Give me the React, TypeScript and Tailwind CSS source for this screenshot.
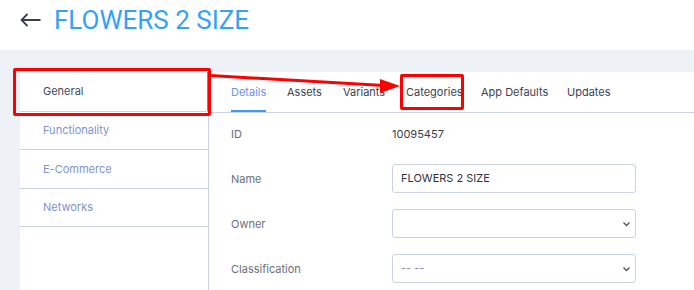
import React from "react";

const tabs: [string, number][] = [
  ["Details", 56],
  ["Assets", 56],
  ["Variants", 63],
  ["Categories", 75],
  ["App Defaults", 86],
  ["Updates", 60],
];
const side: [string, string][] = [
  ["General", "h-[40px]"],
  ["Functionality", "h-[38px]"],
  ["E-Commerce", "h-[39px]"],
  ["Networks", "h-[38px]"],
];

function Chevron() {
  return (
    <svg width="9" height="6" viewBox="0 0 9 6" className="ml-auto">
      <path d="M1.5 1.5 L4.5 4.5 L7.5 1.5" fill="none" stroke="#4b5563" strokeWidth="1.3" />
    </svg>
  );
}

export default function App() {
  return (
    <div
      className="relative w-[694px] h-[290px] overflow-hidden bg-white"
      style={{ fontFamily: "Inter, 'Noto Sans', sans-serif" }}
    >
      <div className="h-[50px] flex items-center pl-[20px]">
        <svg width="21" height="14" viewBox="0 0 21 14" className="mt-[-10px]">
          <path d="M1.5 7 H20.5 M7.5 1 L1.5 7 L7.5 13" fill="none" stroke="#3b3f4a" strokeWidth="1.8" />
        </svg>
        <h1
          className="ml-[13px] text-[26px] leading-none text-[#33a2f5] mt-[-10px]"
          style={{ fontFamily: "Roboto, 'Noto Sans', sans-serif" }}
        >
          FLOWERS 2 SIZE
        </h1>
      </div>
      <div className="h-[240px] bg-[#eef1f5] flex pt-[22px] pl-[20px]">
        <div className="w-[189px] bg-white border-r border-[#c9d3e2] flex flex-col">
          {side.map(([s, h], i) => (
            <div
              key={s}
              className={`${h} flex items-center pl-[23px] text-[11px] border-b border-[#c9d3e2] ${
                i === 0 ? "text-[#454a5c] border-r-[2px] border-r-[#3b9cf0] mr-[-1px]" : "text-[#7d93d2]"
              }`}
            >
              {s}
            </div>
          ))}
        </div>
        <div className="flex-1 bg-white flex flex-col">
          <div className="h-[41px] border-b border-[#c9d3e2] flex pl-[22px] items-stretch">
            {tabs.map(([t, w], i) => (
              <div key={t} className="flex items-stretch text-[11px]" style={{ width: w }}>
                <div
                  className={`flex items-center ${
                    i === 0 ? "text-[#6f92e6] border-b-[2px] border-[#3b9cf0] pt-[2px]" : "text-[#3f4250]"
                  }`}
                >
                  {t}
                </div>
              </div>
            ))}
          </div>
          <div className="pl-[22px] pt-[6px] flex flex-col gap-[16px] text-[11px]">
            <div className="flex items-center h-[29px] pt-[2px]">
              <div className="w-[161px] text-[#6b6f7b]">ID</div>
              <div className="text-[#3b3e4a]">10095457</div>
            </div>
            <div className="flex items-center h-[29px]">
              <div className="w-[161px] text-[#6b6f7b] pt-[2px]">Name</div>
              <div className="w-[244px] h-[29px] border border-[#c9d3e2] rounded-[3px] flex items-center px-[8px] text-[#2f3340]">
                FLOWERS 2 SIZE
              </div>
            </div>
            <div className="flex items-center h-[29px]">
              <div className="w-[161px] text-[#6b6f7b] pt-[2px]">Owner</div>
              <div className="w-[244px] h-[29px] border border-[#c9d3e2] rounded-[3px] flex items-center px-[8px] pr-[4px]">
                <Chevron />
              </div>
            </div>
            <div className="flex items-center h-[29px]">
              <div className="w-[161px] text-[#6b6f7b] pt-[2px]">Classification</div>
              <div className="w-[244px] h-[29px] border border-[#c9d3e2] rounded-[3px] flex items-center px-[8px] pr-[4px] text-[#8a8e99]">
                -- --
                <Chevron />
              </div>
            </div>
          </div>
        </div>
      </div>

      {/* annotations */}
      <div className="absolute left-[13px] top-[68px] w-[198px] h-[48px] border-[3px] border-[#ff0000] rounded-[2px]" />
      <div className="absolute left-[400px] top-[74px] w-[64px] h-[36px] border-[3px] border-[#ff0000] rounded-[2px]" />
      <svg className="absolute left-0 top-0" width="694" height="290">
        <line x1="210" y1="75.5" x2="384" y2="85.5" stroke="#ff0000" strokeWidth="3" />
        <polygon points="380,79 400,86 380,93" fill="#ff0000" />
      </svg>
    </div>
  );
}
